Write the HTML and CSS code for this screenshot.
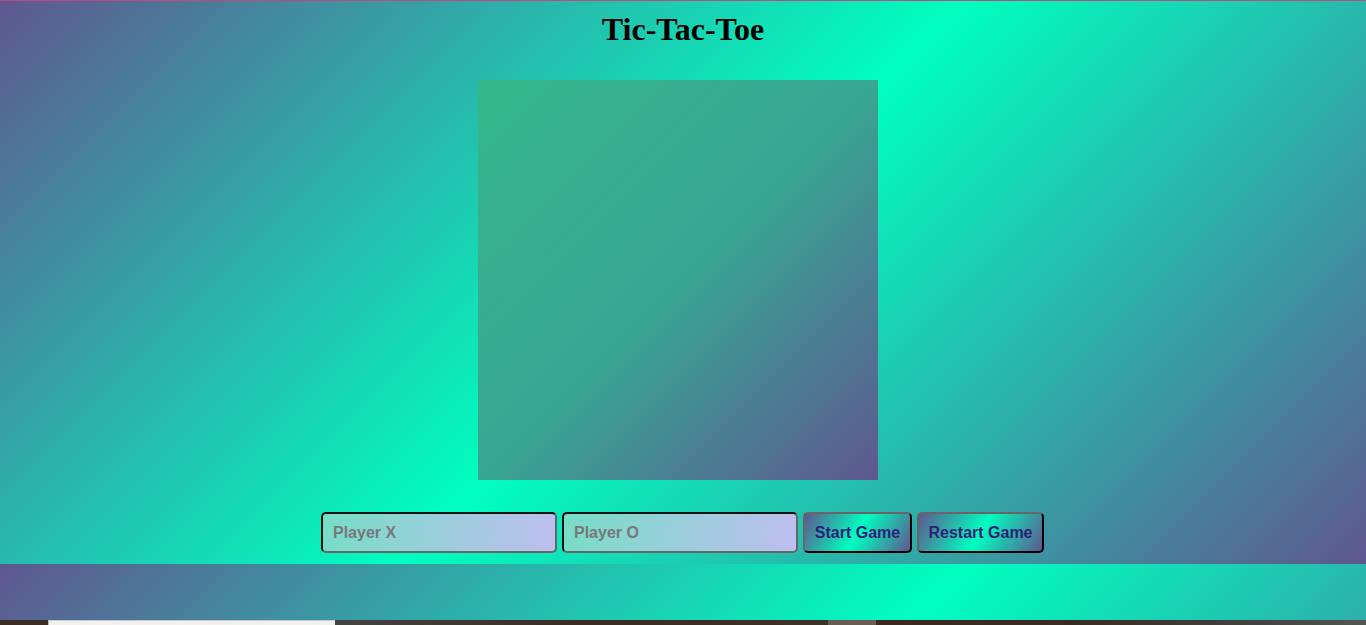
FILE: index.html
```html
<!DOCTYPE html>
<html lang="en">
<head>
<meta charset="utf-8">
<title>Tic-Tac-Toe</title>
<link rel="stylesheet" href="styles.css">
</head>
<body>
<div class="top-line"></div>
<main class="page">
  <h1 class="title">Tic-Tac-Toe</h1>
  <div class="board-wrap">
    <div class="board"></div>
  </div>
  <div class="controls">
    <input class="player-input" type="text" placeholder="Player X">
    <input class="player-input" type="text" placeholder="Player O">
    <button class="btn btn-start" type="button">Start Game</button>
    <button class="btn btn-restart" type="button">Restart Game</button>
  </div>
</main>
<div class="taskbar">
  <div class="tb-seg tb-dark1"></div>
  <div class="tb-seg tb-light"></div>
  <div class="tb-seg tb-dark2"></div>
  <div class="tb-seg tb-mid"></div>
  <div class="tb-seg tb-dark3"></div>
</div>
</body>
</html>
```
FILE: styles.css
```css
html {
  margin: 0;
  padding: 0;
  background: linear-gradient(135deg, #5f5790 0%, #00ffc0 50%, #5f5790 100%);
}

body {
  margin: 0;
  padding: 0;
}

.top-line {
  position: fixed;
  top: 0;
  left: 0;
  right: 0;
  height: 1px;
  background: #bd4c7c;
}

.page {
  display: flex;
  flex-direction: column;
  align-items: center;
  padding: 11px 0 11px;
}

.title {
  margin: 0;
  font-family: "Liberation Serif", "Times New Roman", serif;
  font-size: 32px;
  font-weight: bold;
  line-height: 37px;
  color: #000;
}

.board-wrap {
  display: flex;
  justify-content: center;
  padding-right: 10px;
  margin: 32px 0 32px;
}

.board {
  width: 400px;
  height: 400px;
  background: linear-gradient(135deg, #34b88a 0%, #38a694 50%, #5e5790 100%);
}

.controls {
  display: flex;
  gap: 5px;
  height: 41px;
  padding-right: 1px;
}

.player-input {
  box-sizing: border-box;
  width: 236px;
  height: 41px;
  margin: 0;
  padding: 0 10px;
  border: 2px solid;
  border-color: #111 #666 #666 #111;
  border-radius: 5px;
  background: linear-gradient(100deg, #76dec6 0%, #bfbef0 100%);
  font-family: "Liberation Sans", Arial, sans-serif;
  font-size: 16px;
  font-weight: bold;
  color: #333;
  outline: none;
}

.player-input::placeholder {
  color: #787878;
  opacity: 1;
}

.btn {
  box-sizing: border-box;
  height: 41px;
  margin: 0;
  padding: 0;
  white-space: nowrap;
  border: 2px solid;
  border-color: #666 #000 #000 #666;
  border-radius: 5px;
  background: linear-gradient(120deg, #5f5790 0%, #00ffc0 50%, #5f5790 100%);
  font-family: "Liberation Sans", Arial, sans-serif;
  font-size: 16px;
  font-weight: bold;
  color: #2d1f78;
  cursor: pointer;
}

.btn-start {
  width: 109px;
}

.btn-restart {
  width: 127px;
}

.taskbar {
  position: fixed;
  left: 0;
  right: 0;
  bottom: 0;
  height: 5px;
  display: flex;
}

.tb-seg {
  height: 5px;
}

.tb-dark1 {
  width: 48px;
  background: #3a2e24;
}

.tb-light {
  width: 287px;
  background: #f0f0f0;
  border-left: 1px solid #bbb;
  border-top: 1px solid #ccc;
  box-sizing: border-box;
}

.tb-dark2 {
  width: 493px;
  background: linear-gradient(90deg, #444 0%, #3c2a24 50%, #40302a 100%);
}

.tb-mid {
  width: 48px;
  background: #6a5c55;
}

.tb-dark3 {
  flex: 1;
  background: linear-gradient(90deg, #3e2820 0%, #3a2a26 40%, #444 80%, #555 100%);
}
```
